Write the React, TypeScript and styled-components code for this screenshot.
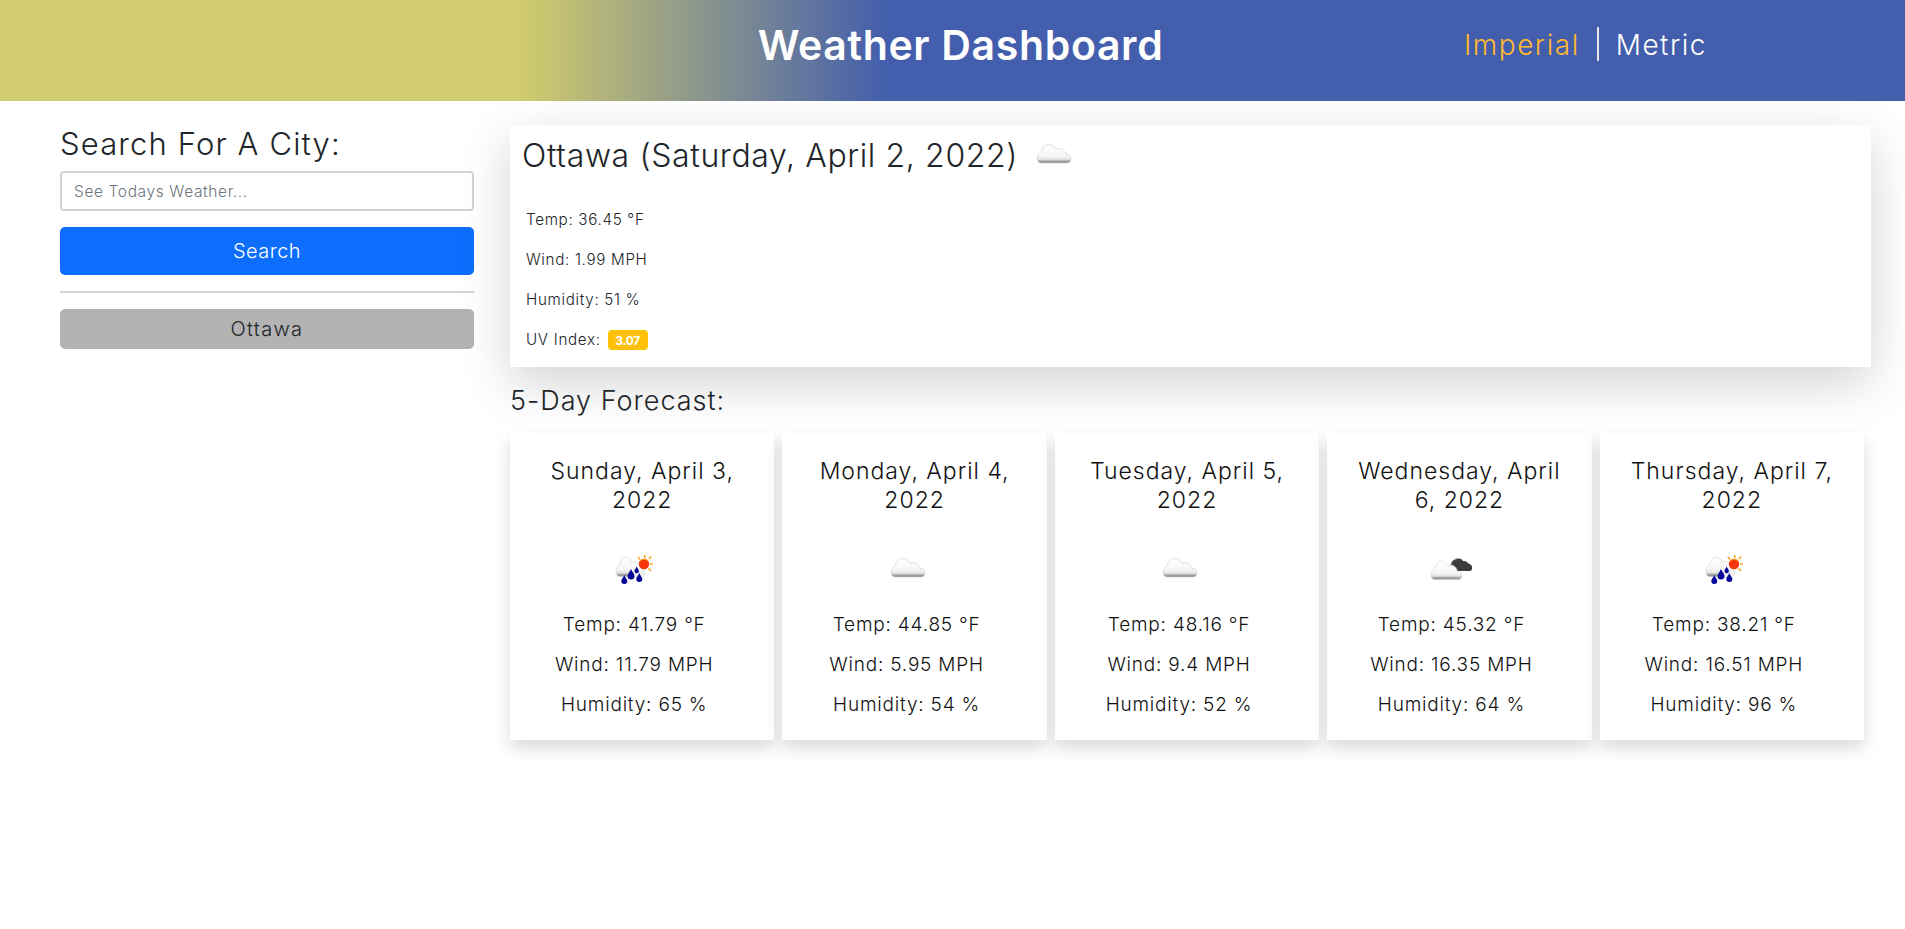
import React, { useId } from "react";
import styled, { createGlobalStyle } from "styled-components";

const Global = createGlobalStyle`
  html, body { margin: 0; padding: 0; background: #fff; }
  body { font-family: Inter, "Open Sans", "Liberation Sans", sans-serif; color: #212529; }
  * { box-sizing: border-box; }
`;

const Page = styled.div`
  width: 1905px;
  min-height: 929px;
  overflow: hidden;
`;
const Header = styled.header`
  height: 101px;
  display: grid;
  grid-template-columns: 1905px;
  position: relative;
  background: linear-gradient(90deg, #d1cc6d 27.3%, #435eac 46.5%);
  align-items: center;
  justify-items: center;
`;
const Title = styled.h1`
  margin: 0 0 10px;
  padding-left: 16px;
  font-size: 41px;
  font-weight: 600;
  letter-spacing: 0.65px;
  line-height: 1.2;
  color: #fff;
`;
const UnitNav = styled.nav`
  position: absolute;
  left: 1464px;
  top: 27px;
  display: flex;
  align-items: center;
  height: 34px;
  font-size: 28px;
  font-weight: 300;
  letter-spacing: 1.5px;
`;
const UnitLink = styled.span<{ $active?: boolean }>`
  padding-top: 2px;
  color: ${(p) => (p.$active ? "#ffb92e" : "#fff")};
`;
const UnitDivider = styled.span`
  width: 2px;
  height: 34px;
  margin: 0 17px;
  background: #e8e8e8;
`;
const Content = styled.div`
  display: flex;
  align-items: flex-start;
  padding: 24px 0 0 60px;
  gap: 36px;
`;
const Sidebar = styled.aside`
  width: 414px;
  display: flex;
  flex-direction: column;
`;
const SearchTitle = styled.h2`
  margin: 0 0 8px;
  font-size: 31px;
  font-weight: 300;
  letter-spacing: 1.14px;
  line-height: 38px;
`;
const SearchInput = styled.input`
  height: 40px;
  width: 100%;
  border: 2px solid #ced4da;
  border-radius: 4px;
  padding: 0 12px;
  font: 300 15.5px Inter, sans-serif;
  letter-spacing: 0.62px;
  color: #212529;
  outline: none;
  &::placeholder { color: #6c757d; opacity: 1; }
`;
const PrimaryButton = styled.button`
  margin-top: 16px;
  height: 48px;
  border: 0;
  border-radius: 5px;
  background: #0d6efd;
  color: #fff;
  font: 300 20px Inter, sans-serif;
  letter-spacing: 0.5px;
`;
const Rule = styled.hr`
  width: 100%;
  height: 2px;
  margin: 16px 0;
  border: 0;
  background: #d3d4d6;
`;
const HistoryButton = styled.button`
  height: 40px;
  border: 0;
  border-radius: 5px;
  background: #b3b3b3;
  color: #212529;
  font: 300 20px Inter, sans-serif;
  letter-spacing: 1.3px;
`;
const Main = styled.main`
  width: 1361px;
  display: flex;
  flex-direction: column;
`;
const CurrentCard = styled.section`
  height: 242px;
  padding: 6px 12px 0;
  background: #fff;
  box-shadow: 0 16px 48px rgba(0, 0, 0, 0.175);
`;
const CityRow = styled.div`
  display: flex;
  align-items: center;
  height: 50px;
  margin-bottom: 18px;
`;
const CityTitle = styled.h2`
  margin: 0 10px 0 0;
  font-size: 32px;
  font-weight: 300;
  letter-spacing: 0.62px;
  line-height: 50px;
`;
const StatLine = styled.p`
  display: flex;
  align-items: center;
  height: 40px;
  margin: 0 0 0 4px;
  font-size: 15.2px;
  font-weight: 300;
  letter-spacing: 0.68px;
  white-space: pre;
`;
const UvBadge = styled.span`
  display: inline-flex;
  align-items: center;
  justify-content: center;
  width: 40px;
  height: 20px;
  margin: 2px 0 0 2px;
  border-radius: 4px;
  background: #ffc107;
  color: #fff;
  font-size: 12px;
  font-weight: 700;
  letter-spacing: -0.3px;
`;
const ForecastTitle = styled.h3`
  margin: 18px 0 16px;
  height: 32px;
  font-size: 27px;
  font-weight: 300;
  letter-spacing: 1px;
  line-height: 32px;
`;
const ForecastRow = styled.div`
  display: flex;
  gap: 8px;
  width: 1354px;
`;
const DayCard = styled.article`
  flex: 1 1 0;
  height: 307px;
  padding: 24px 16px 0;
  background: #fff;
  box-shadow: 0 8px 16px rgba(0, 0, 0, 0.15);
  text-align: center;
`;
const DayTitle = styled.h4`
  margin: 0;
  height: 58px;
  padding: 0 6px;
  font-size: 23px;
  font-weight: 300;
  letter-spacing: 1px;
  line-height: 29px;
  color: #111;
`;
const DayBody = styled.div`
  padding-right: 16px;
  display: flex;
  flex-direction: column;
  align-items: center;
`;
const DayIcon = styled.svg`
  display: block;
  width: 50px;
  height: 50px;
  margin: 30px 0 10px;
`;
const MainIcon = styled.svg`
  display: block;
  width: 50px;
  height: 50px;
`;
const DayStat = styled.p`
  margin: 0;
  height: 40px;
  line-height: 40px;
  font-size: 19px;
  font-weight: 300;
  letter-spacing: 0.8px;
  color: #111;
`;

const CLOUD =
  "M13 32 H39 C41.6 32 43 30.4 43 28 C43 25.4 41 23.4 38 23.6 C37.4 20 34 17.2 30.6 17.6 C29.6 17.7 28.8 18 28 18.6 C26.6 15.4 24 13.4 20.6 13.4 C16.6 13.4 13.8 16.4 13.6 20.8 C10.8 21.6 9 24.2 9 27.2 C9 30 10.8 32 13 32 Z";

function CloudShape({ dx = 0, dy = 0, sx = 1, sy = 1 }: { dx?: number; dy?: number; sx?: number; sy?: number }) {
  const id = useId();
  return (
    <g transform={`translate(${dx} ${dy}) scale(${sx} ${sy})`}>
      <defs>
        <linearGradient id={id} x1="0" y1="0" x2="0" y2="1">
          <stop offset="0" stopColor="#ffffff" />
          <stop offset="0.62" stopColor="#f6f6f6" />
          <stop offset="0.8" stopColor="#e4e4e4" />
          <stop offset="0.92" stopColor="#9a9a9a" />
          <stop offset="1" stopColor="#8a8a8a" />
        </linearGradient>
      </defs>
      <path d={CLOUD} fill={`url(#${id})`} stroke="#cfcfcf" strokeWidth="0.6" />
    </g>
  );
}

function Drop({ x, y, r }: { x: number; y: number; r: number }) {
  return (
    <path
      d={`M${x} ${y - r * 2} C${x + r * 0.4} ${y - r} ${x + r} ${y - r * 0.6} ${x + r} ${y} A${r} ${r} 0 0 1 ${x - r} ${y} C${x - r} ${y - r * 0.6} ${x - r * 0.4} ${y - r} ${x} ${y - r * 2} Z`}
      fill="#06069a"
    />
  );
}

function Glyph({ kind }: { kind: string }) {
  if (kind === "rain") {
    return (
      <>
        <CloudShape dx={-0.65} dy={-2} sx={0.85} sy={1.05} />
        <g stroke="#ffa51e" strokeWidth="1.6">
          <path d="M35.5 10 L36 13 M42 11.5 L40 14 M44 19 L41 19 M42 26 L39.6 23.4 M29 12 L31 14.5" />
        </g>
        <circle cx="35" cy="19" r="5.2" fill="#f5360a" />
        <path d="M30.6 16.5 A5.4 5.4 0 0 1 39.6 16.8" fill="none" stroke="#ff9a1a" strokeWidth="1.2" />
        <path d="M24 33 C24 27 29 25 31 24.5 C32 24 36 24 36 28 C36 31 33 33 30 33 Z" fill="#f0f0f0" />
        <Drop x={15.3} y={36} r={3} />
        <Drop x={22} y={31} r={3.5} />
        <Drop x={27.7} y={26} r={2.2} />
        <Drop x={30.3} y={34} r={3} />
      </>
    );
  }
  if (kind === "broken") {
    return (
      <>
        <path
          d="M25 26 C22 26 22 22 24.5 21.5 C24.5 18 26.5 15 29.5 14.5 C32.5 12.5 36 13.5 37 16 C41 16 42 18 43 19 C46.5 19 47.5 25.5 44 26 Z"
          fill="#3c3c3c"
        />
        <path d="M25.5 20 C25.5 15.5 29 13 32 13.6" fill="none" stroke="#9a9a9a" strokeWidth="0.7" />
        <CloudShape dx={-3.2} dy={2.6} sx={0.91} />
      </>
    );
  }
  return <CloudShape />;
}

const days = [
  { title: "Sunday, April 3, 2022", icon: "rain", temp: "41.79", wind: "11.79", hum: "65" },
  { title: "Monday, April 4, 2022", icon: "cloud", temp: "44.85", wind: "5.95", hum: "54" },
  { title: "Tuesday, April 5, 2022", icon: "cloud", temp: "48.16", wind: "9.4", hum: "52" },
  { title: "Wednesday, April 6, 2022", icon: "broken", temp: "45.32", wind: "16.35", hum: "64" },
  { title: "Thursday, April 7, 2022", icon: "rain", temp: "38.21", wind: "16.51", hum: "96" },
];

export default function App() {
  return (
    <Page>
      <Global />
      <Header>
        <Title>Weather Dashboard</Title>
        <UnitNav>
          <UnitLink $active>Imperial</UnitLink>
          <UnitDivider />
          <UnitLink>Metric</UnitLink>
        </UnitNav>
      </Header>
      <Content>
        <Sidebar>
          <SearchTitle>Search For A City:</SearchTitle>
          <SearchInput placeholder="See Todays Weather..." />
          <PrimaryButton>Search</PrimaryButton>
          <Rule />
          <HistoryButton>Ottawa</HistoryButton>
        </Sidebar>
        <Main>
          <CurrentCard>
            <CityRow>
              <CityTitle>Ottawa (Saturday, April 2, 2022)</CityTitle>
              <MainIcon viewBox="0 0 50 50">
                <Glyph kind="cloud" />
              </MainIcon>
            </CityRow>
            <StatLine>Temp: 36.45 °F</StatLine>
            <StatLine>Wind: 1.99 MPH</StatLine>
            <StatLine>Humidity: 51 %</StatLine>
            <StatLine>
              UV Index: <UvBadge>3.07</UvBadge>
            </StatLine>
          </CurrentCard>
          <ForecastTitle>5-Day Forecast:</ForecastTitle>
          <ForecastRow>
            {days.map((d) => (
              <DayCard key={d.title}>
                <DayTitle>{d.title}</DayTitle>
                <DayBody>
                  <DayIcon viewBox="0 0 50 50">
                    <Glyph kind={d.icon} />
                  </DayIcon>
                  <DayStat>Temp: {d.temp} °F</DayStat>
                  <DayStat>Wind: {d.wind} MPH</DayStat>
                  <DayStat>Humidity: {d.hum} %</DayStat>
                </DayBody>
              </DayCard>
            ))}
          </ForecastRow>
        </Main>
      </Content>
    </Page>
  );
}
